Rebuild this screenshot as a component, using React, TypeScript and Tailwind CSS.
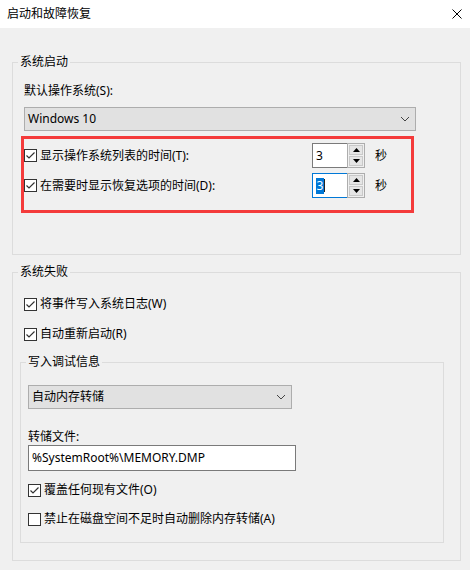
import React from 'react';

const font = "font-['Noto_Sans','Noto_Sans_CJK_SC',sans-serif] text-[12px] leading-[16px] text-black";

const CheckBox: React.FC<{ checked?: boolean }> = ({ checked }) => (
  <svg width="13" height="13" viewBox="0 0 13 13" className="shrink-0">
    <rect x="0.5" y="0.5" width="12" height="12" fill="#fff" stroke="#333" />
    {checked && (
      <polyline points="2.5,6.5 5,9 10.5,3.5" fill="none" stroke="#333" strokeWidth="1.2" />
    )}
  </svg>
);

const CheckRow: React.FC<{ checked?: boolean; label: string; className?: string }> = ({
  checked,
  label,
  className = '',
}) => (
  <div className={`flex items-center gap-[3px] h-[16px] ${className}`}>
    <CheckBox checked={checked} />
    <span className="whitespace-nowrap">{label}</span>
  </div>
);

const Chevron = () => (
  <svg width="10" height="6" viewBox="0 0 10 6">
    <polyline points="1,1 5,5 9,1" fill="none" stroke="#444" strokeWidth="1" />
  </svg>
);

const Dropdown: React.FC<{ value: string; width: string }> = ({ value, width }) => (
  <div
    className={`${width} h-[24px] bg-[#e1e1e1] border border-[#adadad] flex items-center justify-between pl-[3px] pr-[5px]`}
  >
    <span>{value}</span>
    <Chevron />
  </div>
);

const Arrow: React.FC<{ up?: boolean }> = ({ up }) => (
  <svg width="7" height="4" viewBox="0 0 7 4">
    {up ? <polygon points="0,4 3.5,0 7,4" fill="#000" /> : <polygon points="0,0 3.5,4 7,0" fill="#000" />}
  </svg>
);

const SpinBox: React.FC<{ focused?: boolean }> = ({ focused }) => (
  <div className="flex h-[25px]">
    <div
      className={`w-[35px] h-full bg-white border flex items-center pl-[3px] ${
        focused ? 'border-[#0078d7] border-r-0' : 'border-[#7a7a7a] border-r-0'
      }`}
    >
      {focused ? (
        <>
          <span className="bg-[#0078d7] text-white px-[0.5px]">3</span>
          <span className="w-px h-[13px] bg-[#222]" />
        </>
      ) : (
        <span>3</span>
      )}
    </div>
    <div className="w-[18px] h-full border border-[#adadad] flex flex-col">
      <div className="flex-1 m-[1px] mb-0 bg-[#e5e5e5] border border-[#c9c9c9] flex items-center justify-center">
        <Arrow up />
      </div>
      <div className="flex-1 m-[1px] bg-[#e5e5e5] border border-[#c9c9c9] flex items-center justify-center">
        <Arrow />
      </div>
    </div>
  </div>
);

const TimeRow: React.FC<{ label: string; focused?: boolean }> = ({ label, focused }) => (
  <div className="flex items-center h-[25px]">
    <div className="w-[288px] flex items-center gap-[3px]">
      <CheckBox checked />
      <span className="whitespace-nowrap">{label}</span>
    </div>
    <SpinBox focused={focused} />
    <span className="ml-[10px]">秒</span>
  </div>
);

export default function App() {
  return (
    <div className={`w-[470px] h-[570px] bg-[#f0f0f0] flex flex-col ${font}`}>
      <div className="h-[28px] bg-white flex items-center justify-between pl-[7px] pr-[8px] shrink-0">
        <span>启动和故障恢复</span>
        <svg width="10" height="10" viewBox="0 0 10 10">
          <path d="M0.5 0.5 L9.5 9.5 M9.5 0.5 L0.5 9.5" stroke="#000" strokeWidth="1" />
        </svg>
      </div>

      <div className="pt-[26px] pl-[12px]">
        <fieldset className="w-[449px] border border-[#dcdcdc]">
          <legend className="ml-[5px] px-[2px]">系统启动</legend>
          <div className="pl-[8px] pb-[41px]">
            <div className="ml-[3px] mt-[13px]">默认操作系统(S):</div>
            <div className="ml-[3px] mt-[8px]">
              <Dropdown value="Windows 10" width="w-[392px]" />
            </div>
            <div className="mt-[5px] w-[393px] h-[77px] border-[3px] border-[#f43b3b] pt-[4px] flex flex-col gap-[5px]">
              <TimeRow label="显示操作系统列表的时间(T):" />
              <TimeRow label="在需要时显示恢复选项的时间(D):" focused />
            </div>
          </div>
        </fieldset>

        <fieldset className="mt-[9px] w-[449px] border border-[#dcdcdc]">
          <legend className="ml-[5px] px-[2px]">系统失败</legend>
          <div className="pl-[7px] pb-[17px]">
            <CheckRow checked label="将事件写入系统日志(W)" className="ml-[4px] mt-[16px]" />
            <CheckRow checked label="自动重新启动(R)" className="ml-[4px] mt-[14px]" />
            <fieldset className="mt-[12px] w-[424px] border border-[#dcdcdc]">
              <legend className="ml-[5px] px-[2px]">写入调试信息</legend>
              <div className="pl-[7px] pb-[15px]">
                <div className="mt-[15px]">
                  <Dropdown value="自动内存转储" width="w-[264px]" />
                </div>
                <div className="mt-[20px]">转储文件:</div>
                <div className="w-[268px] h-[26px] bg-white border border-[#7a7a7a] flex items-center pl-[3px]">
                  %SystemRoot%\MEMORY.DMP
                </div>
                <CheckRow checked label="覆盖任何现有文件(O)" className="mt-[11px]" />
                <CheckRow label="禁止在磁盘空间不足时自动删除内存转储(A)" className="mt-[13px]" />
              </div>
            </fieldset>
          </div>
        </fieldset>
      </div>
    </div>
  );
}
